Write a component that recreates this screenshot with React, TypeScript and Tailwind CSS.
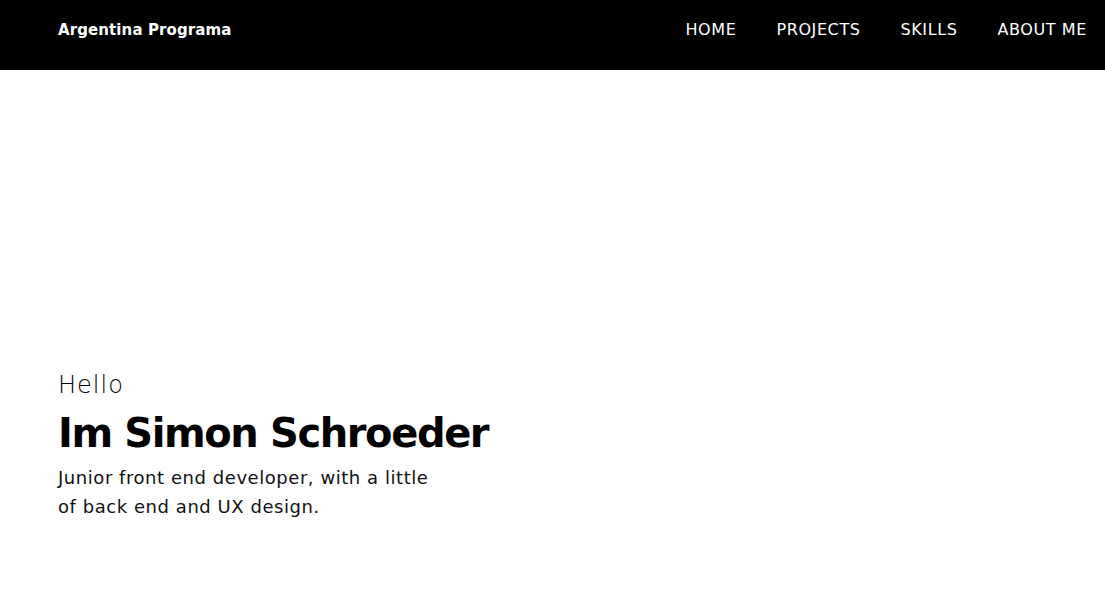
const App = () => {
  const links = ["HOME", "PROJECTS", "SKILLS", "ABOUT ME"];
  return (
    <div className="w-full min-h-screen bg-white font-['DejaVu_Sans',sans-serif]">
      <header className="h-[70px] bg-black text-white flex items-start justify-between pl-[58px] pr-[18px]">
        <h1 className="pt-[20px] text-[15px] font-bold leading-5 tracking-[0.1px]">Argentina Programa</h1>
        <nav className="flex gap-10 pt-[20px]">
          {links.map((l) => (
            <a key={l} className="text-[16px] leading-5 tracking-[0.6px]">
              {l}
            </a>
          ))}
        </nav>
      </header>
      <section className="pl-[58px] pt-[299px]">
        <p className="text-[24px] leading-8 font-light tracking-[1px]">Hello</p>
        <h2 className="text-[40px] font-bold leading-[48px] mt-[8px] tracking-[-1.4px]">Im Simon Schroeder</h2>
        <p className="text-[18px] leading-[29px] max-w-[385px] mt-[6px] text-[#111] tracking-[0.55px]">
          Junior front end developer, with a little of back end and UX design.
        </p>
      </section>
    </div>
  );
};

export default App;
